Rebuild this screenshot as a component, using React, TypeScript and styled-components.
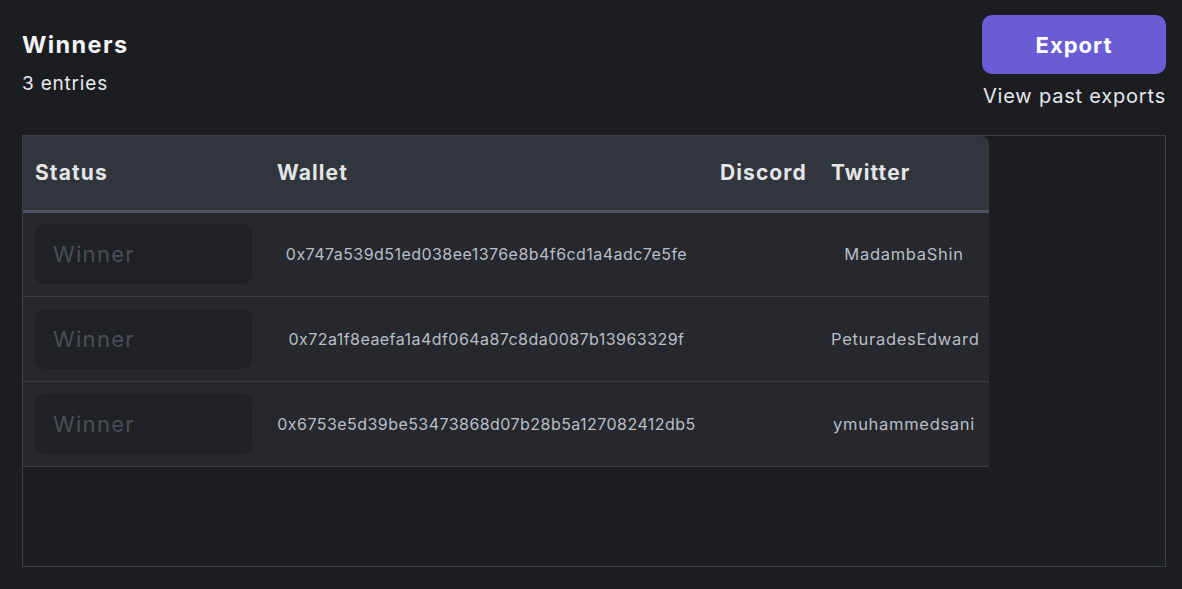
import React from "react";
import styled, { createGlobalStyle } from "styled-components";

const GlobalStyle = createGlobalStyle`
  html, body {
    margin: 0;
    padding: 0;
    background: #1b1d21;
  }
  body {
    font-family: "Inter", "Open Sans", "Liberation Sans", sans-serif;
    color: #eef0f3;
  }
  * { box-sizing: border-box; }
`;

const Page = styled.div`
  width: 1182px;
  height: 589px;
  padding: 15px 16px 22px 22px;
  display: flex;
  flex-direction: column;
`;

const TopBar = styled.div`
  display: flex;
  justify-content: space-between;
  align-items: flex-start;
  height: 120px;
`;

const TitleBlock = styled.div`
  display: flex;
  flex-direction: column;
  padding-top: 16px;
`;

const Title = styled.h1`
  margin: 0;
  font-size: 23.5px;
  line-height: 28px;
  font-weight: 700;
  color: #f3f4f6;
  letter-spacing: 1.4px;
`;

const Count = styled.div`
  margin-top: 14px;
  font-size: 19px;
  line-height: 22px;
  color: #e8eaed;
  letter-spacing: 0.8px;
`;

const Actions = styled.div`
  display: flex;
  flex-direction: column;
  align-items: flex-end;
`;

const ExportButton = styled.button`
  width: 184px;
  height: 59px;
  border: none;
  border-radius: 10px;
  background: #6b5bd5;
  color: #ffffff;
  font-family: inherit;
  font-size: 22px;
  font-weight: 700;
  letter-spacing: 1px;
  cursor: pointer;
`;

const PastLink = styled.a`
  margin-top: 10px;
  font-size: 20px;
  line-height: 24px;
  color: #e6e8eb;
  letter-spacing: 0.8px;
  text-decoration: none;
  cursor: pointer;
`;

const Frame = styled.div`
  flex: 1;
  border: 1px solid #3b3e48;
`;

const Table = styled.table`
  width: 966px;
  border-collapse: collapse;
  border-spacing: 0;
  table-layout: fixed;
`;

const HeadRow = styled.tr`
  background: #31353c;
  height: 75px;
  border-bottom: 3px solid #4b5562;
`;

const HeadCell = styled.th<{ $w: number; $last?: boolean }>`
  width: ${(p) => p.$w}px;
  padding: 0 12px;
  text-align: left;
  font-size: 21px;
  font-weight: 700;
  color: #e4e5e7;
  letter-spacing: 1.1px;
  white-space: nowrap;
  border-top-right-radius: ${(p) => (p.$last ? "8px" : "0")};
`;

const BodyRow = styled.tr`
  background: #26282d;
  height: 85px;
  border-bottom: 1px solid #3a3d49;
`;

const Cell = styled.td<{ $size?: number; $spacing?: number }>`
  padding: 0 12px;
  text-align: center;
  font-size: ${(p) => p.$size ?? 16}px;
  letter-spacing: ${(p) => p.$spacing ?? 0.45}px;
  color: #babec6;
  white-space: nowrap;
`;

const StatusCell = styled.td`
  padding: 0 12px;
`;

const StatusInput = styled.input`
  display: block;
  width: 217px;
  height: 60px;
  border: none;
  border-radius: 9px;
  background: #1f2125;
  padding: 0 18px;
  font-family: inherit;
  font-size: 22px;
  letter-spacing: 1.3px;
  color: #d0d2d6;
  outline: none;
  &::placeholder {
    color: #4a4d55;
  }
`;

type Winner = { wallet: string; discord: string; twitter: string };

const winners: Winner[] = [
  { wallet: "0x747a539d51ed038ee1376e8b4f6cd1a4adc7e5fe", discord: "", twitter: "MadambaShin" },
  { wallet: "0x72a1f8eaefa1a4df064a87c8da0087b13963329f", discord: "", twitter: "PeturadesEdward" },
  { wallet: "0x6753e5d39be53473868d07b28b5a127082412db5", discord: "", twitter: "ymuhammedsani" },
];

export default function App() {
  return (
    <>
      <GlobalStyle />
      <Page>
        <TopBar>
          <TitleBlock>
            <Title>Winners</Title>
            <Count>{winners.length} entries</Count>
          </TitleBlock>
          <Actions>
            <ExportButton>Export</ExportButton>
            <PastLink>View past exports</PastLink>
          </Actions>
        </TopBar>
        <Frame>
          <Table>
            <thead>
              <HeadRow>
                <HeadCell $w={242}>Status</HeadCell>
                <HeadCell $w={443}>Wallet</HeadCell>
                <HeadCell $w={111}>Discord</HeadCell>
                <HeadCell $w={170} $last>Twitter</HeadCell>
              </HeadRow>
            </thead>
            <tbody>
              {winners.map((w) => (
                <BodyRow key={w.wallet}>
                  <StatusCell>
                    <StatusInput placeholder="Winner" />
                  </StatusCell>
                  <Cell>{w.wallet}</Cell>
                  <Cell>{w.discord}</Cell>
                  <Cell $size={16.5} $spacing={0.7}>{w.twitter}</Cell>
                </BodyRow>
              ))}
            </tbody>
          </Table>
        </Frame>
      </Page>
    </>
  );
}
